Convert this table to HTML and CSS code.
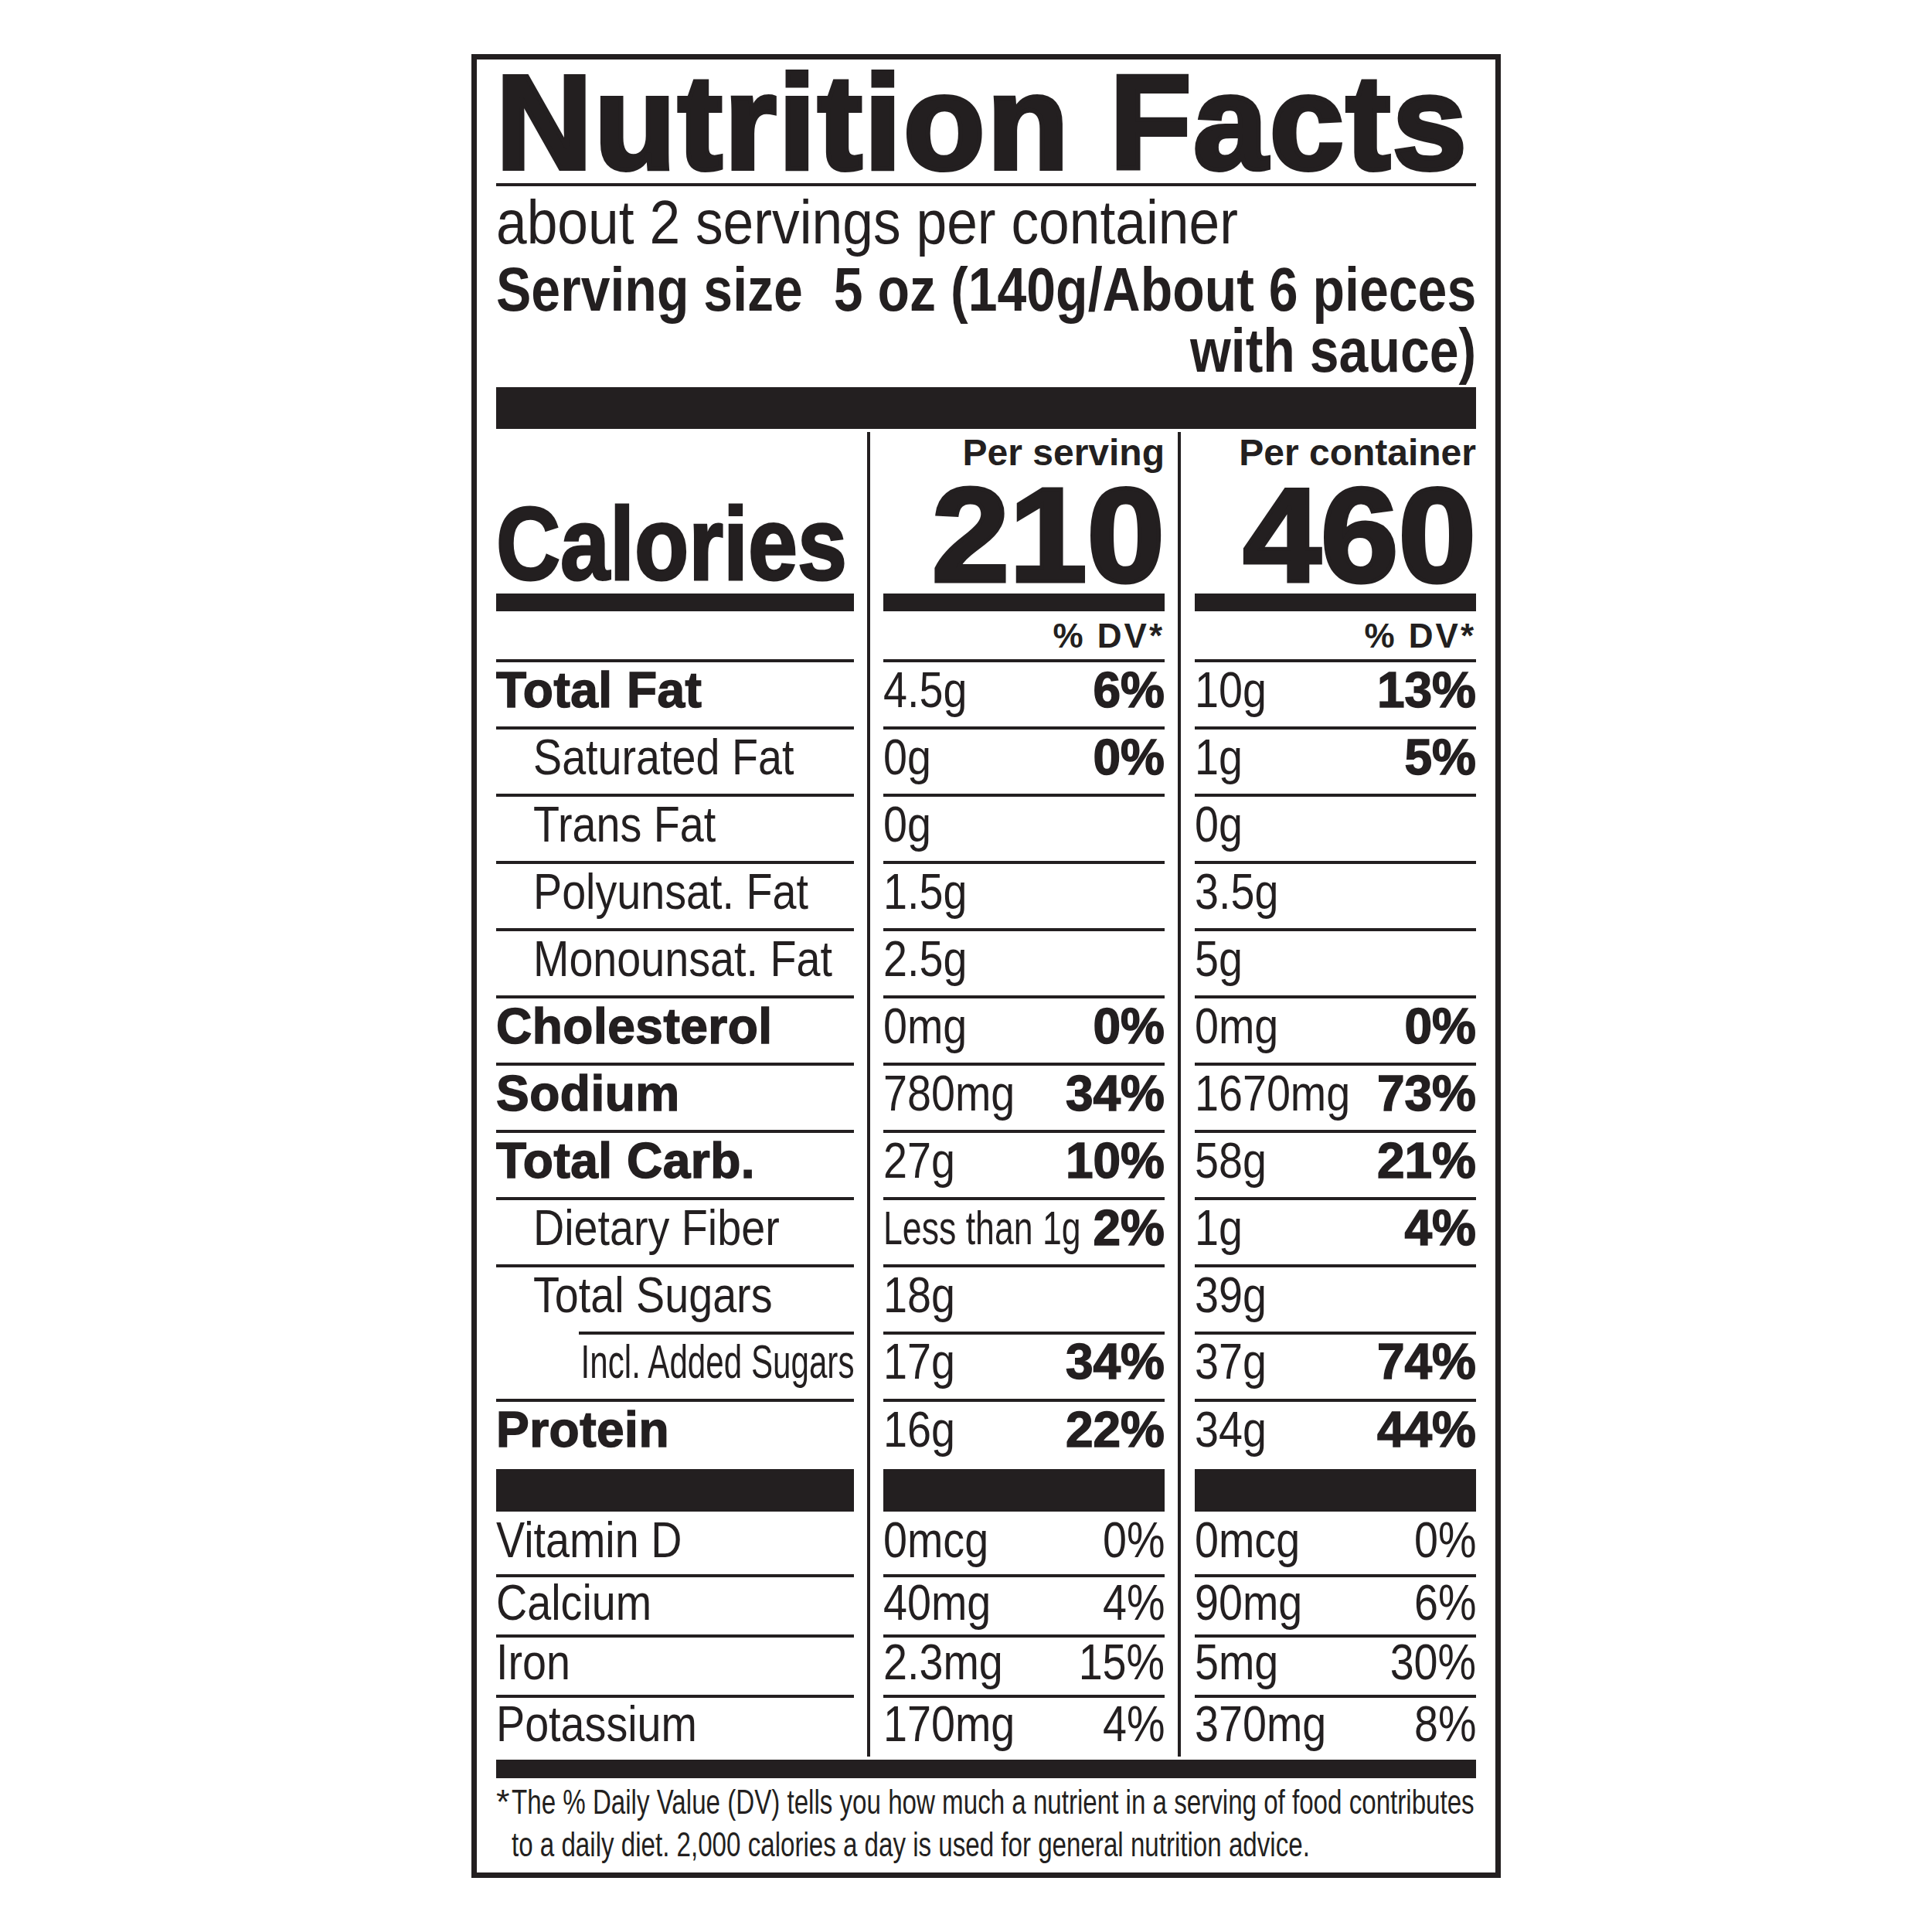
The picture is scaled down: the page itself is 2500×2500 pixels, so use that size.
FILE: index.html
```html
<!DOCTYPE html>
<html lang="en">
<head>
<meta charset="utf-8">
<title>Nutrition Facts</title>
<link rel="stylesheet" href="styles.css">
</head>
<body>
<div class="page">
  <div class="label">
    <div class="title">Nutrition Facts</div>
    <div class="rule"></div>
    <div class="servings"><span>about 2 servings per container</span></div>
    <div class="serving">
      <span>Serving size</span>
      <span class="serving-val">5 oz (140g/About 6 pieces<br>with sauce)</span>
    </div>
    <div class="bar-xl"></div>

    <div class="table">
      <div class="col c1">
        <div class="hdr"></div>
        <div class="big"><span class="cal-label">Calories</span></div>
        <div class="calbar"></div>
        <div class="dv"></div>
        <div class="r"><span class="lb">Total Fat</span></div>
        <div class="r"><span class="ln">Saturated Fat</span></div>
        <div class="r"><span class="ln">Trans Fat</span></div>
        <div class="r"><span class="ln">Polyunsat. Fat</span></div>
        <div class="r"><span class="ln">Monounsat. Fat</span></div>
        <div class="r"><span class="lb">Cholesterol</span></div>
        <div class="r"><span class="lb">Sodium</span></div>
        <div class="r"><span class="lb">Total Carb.</span></div>
        <div class="r"><span class="ln">Dietary Fiber</span></div>
        <div class="r sug"><span class="ln">Total Sugars</span></div>
        <div class="r r-incl"><span class="li">Incl. Added Sugars</span></div>
        <div class="r last"><span class="lb">Protein</span></div>
        <div class="bar-m"></div>
        <div class="r v1"><span class="lv">Vitamin D</span></div>
        <div class="r v2"><span class="lv">Calcium</span></div>
        <div class="r v3"><span class="lv">Iron</span></div>
        <div class="r v4"><span class="lv">Potassium</span></div>
      </div>

      <div class="col c2">
        <div class="hdr">Per serving</div>
        <div class="big"><span class="cal-num">210</span></div>
        <div class="calbar"></div>
        <div class="dv">% DV*</div>
        <div class="r"><span class="amt">4.5g</span><span class="pb">6%</span></div>
        <div class="r"><span class="amt">0g</span><span class="pb">0%</span></div>
        <div class="r"><span class="amt">0g</span></div>
        <div class="r"><span class="amt">1.5g</span></div>
        <div class="r"><span class="amt">2.5g</span></div>
        <div class="r"><span class="amt">0mg</span><span class="pb">0%</span></div>
        <div class="r"><span class="amt">780mg</span><span class="pb">34%</span></div>
        <div class="r"><span class="amt">27g</span><span class="pb">10%</span></div>
        <div class="r"><span class="amt lt">Less than 1g</span><span class="pb">2%</span></div>
        <div class="r"><span class="amt">18g</span></div>
        <div class="r r-incl"><span class="amt">17g</span><span class="pb">34%</span></div>
        <div class="r last"><span class="amt">16g</span><span class="pb">22%</span></div>
        <div class="bar-m"></div>
        <div class="r v1"><span class="amt">0mcg</span><span class="pr">0%</span></div>
        <div class="r v2"><span class="amt">40mg</span><span class="pr">4%</span></div>
        <div class="r v3"><span class="amt">2.3mg</span><span class="pr">15%</span></div>
        <div class="r v4"><span class="amt">170mg</span><span class="pr">4%</span></div>
      </div>

      <div class="col c3">
        <div class="hdr">Per container</div>
        <div class="big"><span class="cal-num">460</span></div>
        <div class="calbar"></div>
        <div class="dv">% DV*</div>
        <div class="r"><span class="amt">10g</span><span class="pb">13%</span></div>
        <div class="r"><span class="amt">1g</span><span class="pb">5%</span></div>
        <div class="r"><span class="amt">0g</span></div>
        <div class="r"><span class="amt">3.5g</span></div>
        <div class="r"><span class="amt">5g</span></div>
        <div class="r"><span class="amt">0mg</span><span class="pb">0%</span></div>
        <div class="r"><span class="amt">1670mg</span><span class="pb">73%</span></div>
        <div class="r"><span class="amt">58g</span><span class="pb">21%</span></div>
        <div class="r"><span class="amt">1g</span><span class="pb">4%</span></div>
        <div class="r"><span class="amt">39g</span></div>
        <div class="r r-incl"><span class="amt">37g</span><span class="pb">74%</span></div>
        <div class="r last"><span class="amt">34g</span><span class="pb">44%</span></div>
        <div class="bar-m"></div>
        <div class="r v1"><span class="amt">0mcg</span><span class="pr">0%</span></div>
        <div class="r v2"><span class="amt">90mg</span><span class="pr">6%</span></div>
        <div class="r v3"><span class="amt">5mg</span><span class="pr">30%</span></div>
        <div class="r v4"><span class="amt">370mg</span><span class="pr">8%</span></div>
      </div>
    </div>

    <div class="bar-s"></div>
    <div class="foot">
      <span class="star">*</span>
      <span class="foot-text">The % Daily Value (DV) tells you how much a nutrient in a serving of food contributes<br>to a daily diet. 2,000 calories a day is used for general nutrition advice.</span>
    </div>
  </div>
</div>
</body>
</html>
```

FILE: styles.css
```css
* {
  box-sizing: border-box;
}

html,
body {
  margin: 0;
  padding: 0;
  background: #ffffff;
}

body {
  font-family: "Liberation Sans", Arial, Helvetica, sans-serif;
  color: #231f20;
}

.page {
  padding: 70px 0 0 610px;
}

.label {
  width: 1332px;
  border: 7px solid #231f20;
  padding: 6px 25px 9px 25px;
}

/* ---------- header ---------- */
.title {
  font-size: 172px;
  line-height: 151px;
  font-weight: 700;
  letter-spacing: 3px;
  -webkit-text-stroke: 6px #231f20;
  white-space: nowrap;
}

.rule {
  height: 4px;
  margin-top: 3px;
  background: #231f20;
}

.servings {
  margin-top: 6px;
  font-size: 80px;
  line-height: 81px;
  white-space: nowrap;
}

.servings span {
  display: inline-block;
  transform: scaleX(0.892);
  transform-origin: left center;
}

.serving {
  margin-top: 7px;
  width: 1492px;
  display: flex;
  justify-content: space-between;
  font-size: 80px;
  line-height: 79px;
  font-weight: 700;
  white-space: nowrap;
  transform: scaleX(0.85);
  transform-origin: left center;
}

.serving-val {
  text-align: right;
}

.bar-xl {
  height: 54px;
  margin-top: 8px;
  background: #231f20;
}

/* ---------- table ---------- */
.table {
  display: flex;
  margin: 4px 0;
}

.col {
  display: flex;
  flex-direction: column;
}

.c1 {
  width: 463px;
}

.c2,
.c3 {
  border-left: 4px solid #231f20;
  margin-left: 17px;
}

.c2 {
  width: 385px;
  padding-left: 17px;
}

.c3 {
  width: 386px;
  padding-left: 18px;
}

.hdr {
  height: 58px;
  font-size: 48px;
  line-height: 53px;
  font-weight: 700;
  text-align: right;
  white-space: nowrap;
}

.big {
  height: 151px;
  display: grid;
  white-space: nowrap;
}

.cal-num {
  justify-self: end;
  font-size: 172px;
  line-height: 151px;
  font-weight: 700;
  -webkit-text-stroke: 5px #231f20;
  transform: scaleX(1.05);
  transform-origin: right center;
}

.cal-label {
  justify-self: start;
  font-size: 133px;
  line-height: 174px;
  font-weight: 700;
  -webkit-text-stroke: 3px #231f20;
  transform: scaleX(0.865);
  transform-origin: left center;
}

.calbar {
  height: 23px;
  background: #231f20;
}

.dv {
  height: 66px;
  border-bottom: 4px solid #231f20;
  font-size: 44px;
  line-height: 63px;
  font-weight: 700;
  letter-spacing: 3px;
  text-align: right;
  white-space: nowrap;
}

.r {
  height: 87px;
  border-bottom: 4px solid #231f20;
  display: grid;
  grid-template-columns: 100%;
  font-size: 64px;
  line-height: 72px;
  white-space: nowrap;
}

.r > span {
  grid-area: 1 / 1;
}

.r.last {
  border-bottom: 0;
}

.r.sug {
  border-bottom: 0;
  background: linear-gradient(#231f20, #231f20) right bottom / 356px 4px no-repeat;
}

.bar-m {
  height: 55px;
  background: #231f20;
}

/* labels */
.lb {
  justify-self: start;
  font-weight: 700;
  letter-spacing: 0.5px;
  -webkit-text-stroke: 1.5px #231f20;
}

.ln {
  justify-self: start;
  margin-left: 48px;
  transform: scaleX(0.87);
  transform-origin: left center;
}

.lv {
  justify-self: start;
  transform: scaleX(0.87);
  transform-origin: left center;
}

.li {
  justify-self: end;
  font-size: 62px;
  transform: scaleX(0.68);
  transform-origin: right center;
}

.r-incl {
  line-height: 70px;
}

/* values */
.amt {
  justify-self: start;
  transform: scaleX(0.87);
  transform-origin: left center;
}

.amt.lt {
  font-size: 62px;
  transform: scaleX(0.72);
}

.pb {
  justify-self: end;
  font-weight: 700;
  -webkit-text-stroke: 1.5px #231f20;
}

.pr {
  justify-self: end;
  transform: scaleX(0.87);
  transform-origin: right center;
}

/* vitamins */
.v1 {
  height: 85px;
  line-height: 74px;
}

.v2 {
  height: 78px;
  line-height: 66px;
}

.v3 {
  height: 78px;
  line-height: 64px;
}

.v4 {
  height: 76px;
  line-height: 68px;
  border-bottom: 0;
}

/* ---------- footnote ---------- */
.bar-s {
  height: 24px;
  background: #231f20;
}

.foot {
  margin-top: 3px;
  display: flex;
  font-size: 45px;
  line-height: 55px;
  white-space: nowrap;
}

.star {
  width: 20px;
  flex: 0 0 20px;
}

.foot-text {
  display: inline-block;
  transform: scaleX(0.736);
  transform-origin: left center;
}
```
